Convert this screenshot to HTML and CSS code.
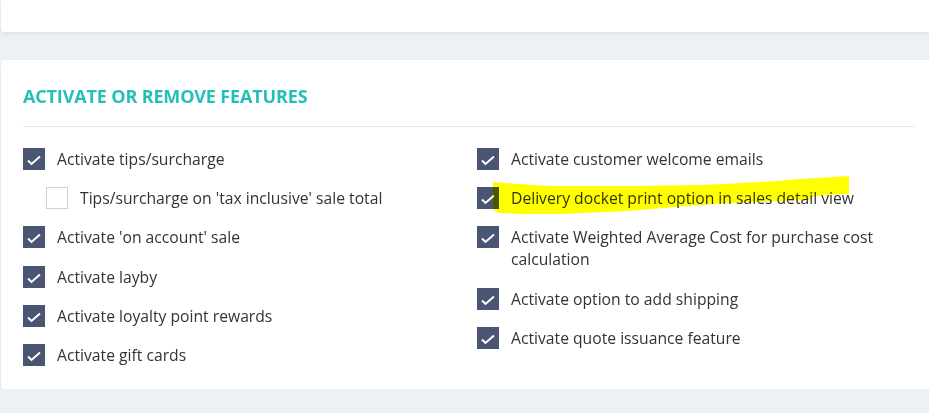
FILE: index.html
```html
<!DOCTYPE html>
<html lang="en">
  <head>
    <meta charset="UTF-8" />
    <meta name="viewport" content="width=device-width, initial-scale=1.0" />
    <title>Settings - Features</title>
    <link rel="stylesheet" href="styles.css">
  </head>
  <body>
    <div class="card card-top"></div>

    <div class="card features">
      <h2 class="section-title">Activate or remove features</h2>

      <div class="features-grid">
        <ul class="feature-list">
          <li class="feature"><span class="checkbox checked"><svg viewBox="0 0 22 22"><path d="M5 12.5 L8.5 16 L17 8.5" /></svg></span><span class="label">Activate tips/surcharge</span></li>
          <li class="feature sub"><span class="checkbox"></span><span class="label">Tips/surcharge on 'tax inclusive' sale total</span></li>
          <li class="feature"><span class="checkbox checked"><svg viewBox="0 0 22 22"><path d="M5 12.5 L8.5 16 L17 8.5" /></svg></span><span class="label">Activate 'on account' sale</span></li>
          <li class="feature"><span class="checkbox checked"><svg viewBox="0 0 22 22"><path d="M5 12.5 L8.5 16 L17 8.5" /></svg></span><span class="label">Activate layby</span></li>
          <li class="feature"><span class="checkbox checked"><svg viewBox="0 0 22 22"><path d="M5 12.5 L8.5 16 L17 8.5" /></svg></span><span class="label">Activate loyalty point rewards</span></li>
          <li class="feature"><span class="checkbox checked"><svg viewBox="0 0 22 22"><path d="M5 12.5 L8.5 16 L17 8.5" /></svg></span><span class="label">Activate gift cards</span></li>
        </ul>

        <ul class="feature-list">
          <li class="feature"><span class="checkbox checked"><svg viewBox="0 0 22 22"><path d="M5 12.5 L8.5 16 L17 8.5" /></svg></span><span class="label">Activate customer welcome emails</span></li>
          <li class="feature"><span class="checkbox checked"><svg viewBox="0 0 22 22"><path d="M5 12.5 L8.5 16 L17 8.5" /></svg></span><span class="label">Delivery docket print option in sales detail view</span></li>
          <li class="feature"><span class="checkbox checked"><svg viewBox="0 0 22 22"><path d="M5 12.5 L8.5 16 L17 8.5" /></svg></span><span class="label">Activate Weighted Average Cost for purchase cost calculation</span></li>
          <li class="feature"><span class="checkbox checked"><svg viewBox="0 0 22 22"><path d="M5 12.5 L8.5 16 L17 8.5" /></svg></span><span class="label">Activate option to add shipping</span></li>
          <li class="feature"><span class="checkbox checked"><svg viewBox="0 0 22 22"><path d="M5 12.5 L8.5 16 L17 8.5" /></svg></span><span class="label">Activate quote issuance feature</span></li>
        </ul>
      </div>

      <!-- marker highlight drawn over the screenshot -->
      <svg class="highlight" viewBox="0 0 360 42" width="360" height="42">
        <path d="M0 7 C25 9 45 11 67 11 C100 11 120 11 134 11 C160 11 185 10 207 10 C230 9 250 8 267 7 C285 6 295 5 307 4 C325 3 340 2 356 1 L356 19 C340 20 328 20 322 21 C318 22 318 24 317 25 C300 25 295 26 287 26 C260 27 235 28 207 30 C180 32 160 34 134 36 C110 37 90 38 67 39 C40 39 20 39 7 38 C3 37 0 35 0 31 Z" />
      </svg>
    </div>
  </body>
</html>
```

FILE: styles.css
```css
body {
  margin: 0;
  padding: 0 0 0 1px;
  background-color: #edf0f5;
  font-family: "Open Sans", Arial, sans-serif;
  color: #333;
  overflow: hidden;
}
.card {
  background: #fff;
  border-radius: 3px 0 0 3px;
  box-shadow: 0 2px 4px rgba(60, 70, 90, 0.08);
  margin-right: -20px;
}
.card-top {
  height: 32px;
  border-radius: 0 0 0 3px;
}
.features {
  position: relative;
  margin-top: 28px;
  padding: 25px 34px 6px 22px;
}
.section-title {
  margin: 0;
  padding-bottom: 19px;
  border-bottom: 1px solid #e8e8e8;
  font-size: 18px;
  font-weight: 700;
  line-height: 22px;
  letter-spacing: -0.15px;
  text-transform: uppercase;
  color: #26bfb8;
}
.features-grid {
  display: grid;
  grid-template-columns: 454px 1fr;
  padding-top: 21px;
}
.feature-list {
  list-style: none;
  margin: 0;
  padding: 0;
}
.feature {
  display: flex;
  align-items: flex-start;
  gap: 12px;
  margin-bottom: 17.2px;
  font-size: 15.7px;
  line-height: 22px;
}
.feature.sub {
  padding-left: 23px;
}
.checkbox {
  flex: none;
  width: 22px;
  height: 22px;
  box-sizing: border-box;
  border: 1px solid #d3cfcb;
  background: #fff;
}
.checkbox.checked {
  border: none;
  background: #4a5573;
}
.checkbox svg {
  display: block;
  width: 22px;
  height: 22px;
  fill: none;
  stroke: #fff;
  stroke-width: 2;
}
.label {
  max-width: 400px;
}
.highlight {
  position: absolute;
  left: 492px;
  top: 115px;
  fill: #ffff00;
  mix-blend-mode: multiply;
}
```
